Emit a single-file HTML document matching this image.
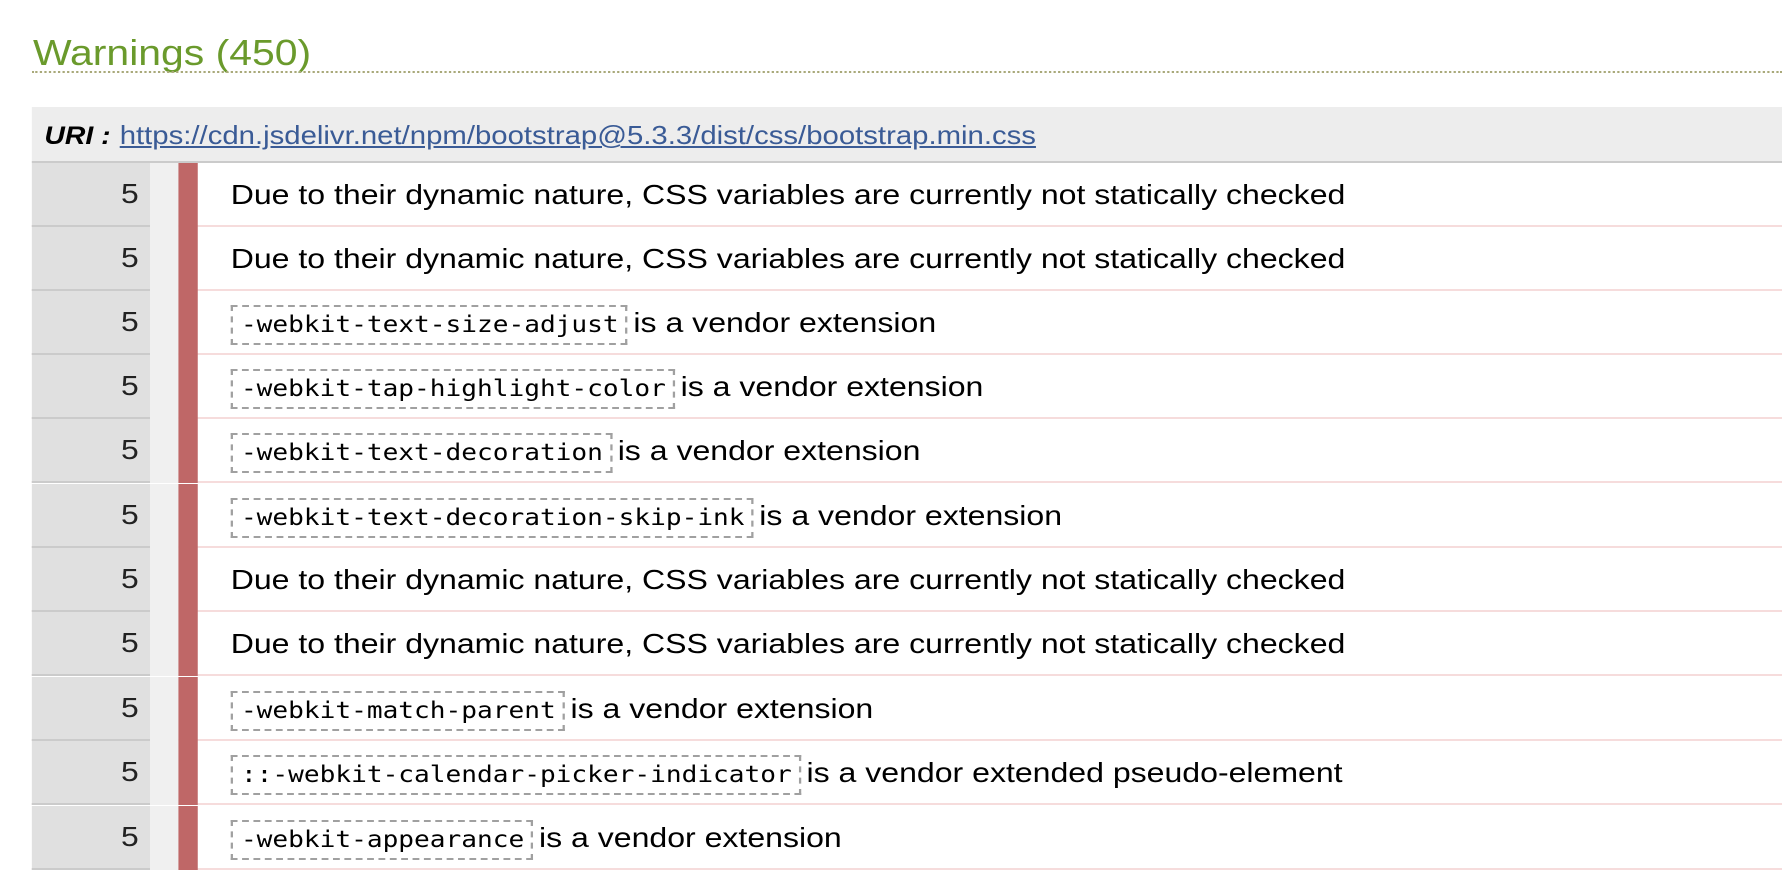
<!DOCTYPE html>
<html><head><meta charset="utf-8"><style>
body{margin:0;background:#fff;width:1782px;height:852px;overflow:hidden;position:relative;font-family:"Liberation Sans",Arial,sans-serif;}
#w{position:absolute;left:0;top:0;width:1568px;height:852px;transform:scaleX(1.1365);transform-origin:0 0;}
h2{position:absolute;left:29px;top:31px;margin:0;font-weight:normal;font-size:36px;color:#6a9a2c;line-height:44px;}
.dot{position:absolute;left:28px;right:0;top:71px;border-top:2px dotted #a9a97a;}
.uri{position:absolute;left:28px;right:0;top:107px;height:54px;background:#ededed;border-bottom:2px solid #cbcbcb;font-size:25px;line-height:58px;}
.uri b{font-style:italic;margin-left:11px;margin-right:8px;}
.uri a{color:#3a5b96;text-decoration:underline;font-size:25.8px;}
.row{position:absolute;left:28px;right:0;height:62px;border-bottom:2px solid #f6dcdc;}
.num{position:absolute;left:0;top:0;width:104px;height:64px;background:#e0e0e0;border-bottom:2px solid #cbcbcb;box-sizing:border-box;text-align:right;padding-right:10px;font-size:28px;line-height:62px;color:#222;}
.g{position:absolute;left:104px;top:0;width:25px;height:64px;background:#f0f0f0;}
.r{position:absolute;left:129px;top:0;width:17px;height:64px;background:#bf6767;}
.t{position:absolute;left:175px;top:0;font-size:28.2px;line-height:62px;color:#000;white-space:nowrap;}
code{font-family:"DejaVu Sans Mono","Liberation Mono",monospace;font-size:23px;border:2px dashed #a0a0a0;padding:5px 6px 5px 7px;margin-right:5px;}
</style></head><body><div id="w">
<h2>Warnings (450)</h2>
<div class="dot"></div>
<div class="uri"><b>URI :</b><a>https://cdn.jsdelivr.net/npm/bootstrap@5.3.3/dist/css/bootstrap.min.css</a></div>

<div class="row" style="top:163px"><div class="num">5</div><div class="g"></div><div class="r"></div><div class="t">Due to their dynamic nature, CSS variables are currently not statically checked</div></div>
<div class="row" style="top:227px"><div class="num">5</div><div class="g"></div><div class="r"></div><div class="t">Due to their dynamic nature, CSS variables are currently not statically checked</div></div>
<div class="row" style="top:291px"><div class="num">5</div><div class="g"></div><div class="r"></div><div class="t"><code>-webkit-text-size-adjust</code>is a vendor extension</div></div>
<div class="row" style="top:355px"><div class="num">5</div><div class="g"></div><div class="r"></div><div class="t"><code>-webkit-tap-highlight-color</code>is a vendor extension</div></div>
<div class="row" style="top:419px"><div class="num">5</div><div class="g"></div><div class="r"></div><div class="t"><code>-webkit-text-decoration</code>is a vendor extension</div></div>
<div class="row" style="top:484px"><div class="num">5</div><div class="g"></div><div class="r"></div><div class="t"><code>-webkit-text-decoration-skip-ink</code>is a vendor extension</div></div>
<div class="row" style="top:548px"><div class="num">5</div><div class="g"></div><div class="r"></div><div class="t">Due to their dynamic nature, CSS variables are currently not statically checked</div></div>
<div class="row" style="top:612px"><div class="num">5</div><div class="g"></div><div class="r"></div><div class="t">Due to their dynamic nature, CSS variables are currently not statically checked</div></div>
<div class="row" style="top:677px"><div class="num">5</div><div class="g"></div><div class="r"></div><div class="t"><code>-webkit-match-parent</code>is a vendor extension</div></div>
<div class="row" style="top:741px"><div class="num">5</div><div class="g"></div><div class="r"></div><div class="t"><code>::-webkit-calendar-picker-indicator</code>is a vendor extended pseudo-element</div></div>
<div class="row" style="top:806px"><div class="num">5</div><div class="g"></div><div class="r"></div><div class="t"><code>-webkit-appearance</code>is a vendor extension</div></div>
</div></body></html>
